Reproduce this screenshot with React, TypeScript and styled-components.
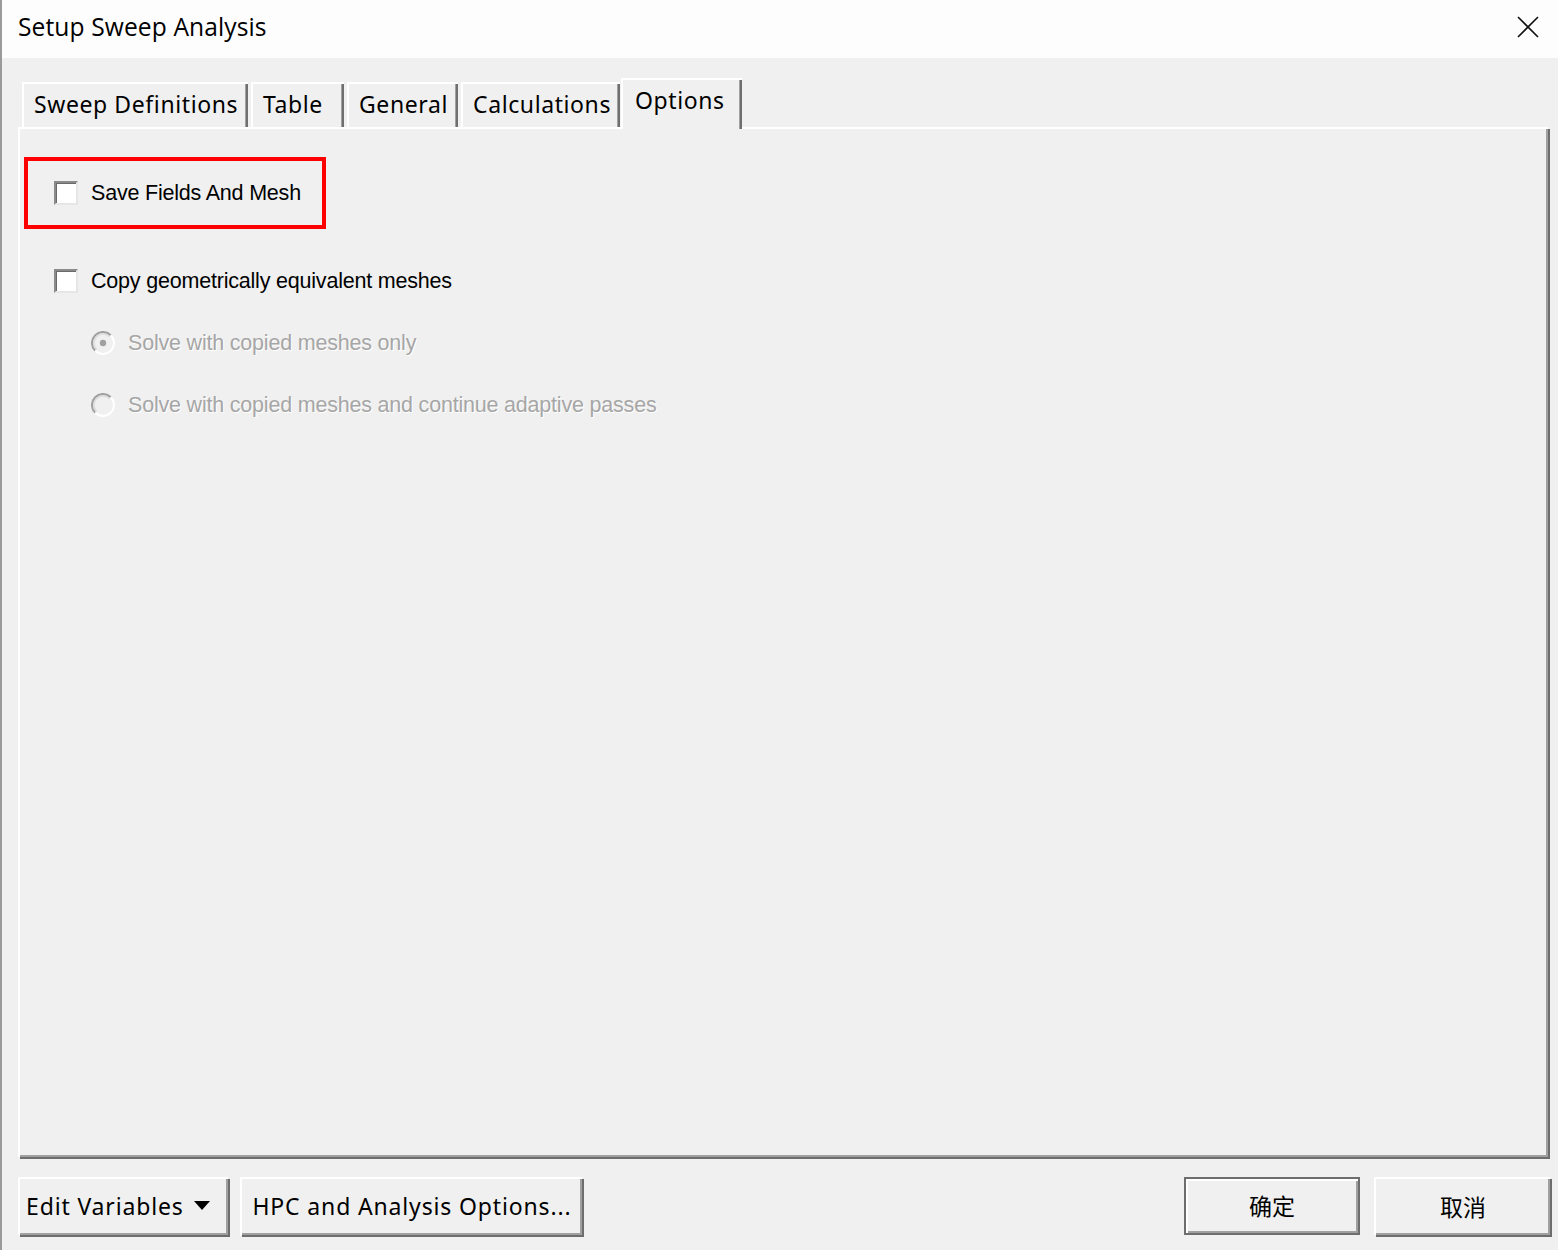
import React from "react"
import styled, { createGlobalStyle, css } from "styled-components"

const GlobalStyle = createGlobalStyle`
  html, body {
    margin: 0;
    padding: 0;
    background: #f0f0f0;
  }
`

const Window = styled.div`
  width: 1558px;
  height: 1250px;
  box-sizing: border-box;
  border-left: 2px solid #9a9a9a;
  background: #f0f0f0;
  display: flex;
  flex-direction: column;
  font-family: "Noto Sans", "DejaVu Sans", sans-serif;
  color: #000;
  overflow: hidden;
`

const TitleBar = styled.div`
  height: 58px;
  flex: none;
  background: #fefdfe;
  display: flex;
  align-items: center;
  justify-content: space-between;
  padding: 0 16px 5px 16px;
  box-sizing: border-box;

  .title {
    font-family: "Open Sans", "Noto Sans", sans-serif;
    font-size: 24.6px;
    letter-spacing: 0.1px;
  }
`

const CloseButton = styled.button`
  width: 28px;
  height: 28px;
  border: none;
  background: transparent;
  padding: 0;
  display: flex;
  align-items: center;
  justify-content: center;
`

const Body = styled.div`
  flex: 1;
  display: flex;
  flex-direction: column;
  padding: 20px 8px 15px 16px;
`

const TabStrip = styled.div`
  display: flex;
  align-items: flex-end;
  height: 49px;
  padding-left: 4px;
  gap: 3px;
  position: relative;
  z-index: 1;
`

const Tab = styled.div<{ width: number; active?: boolean }>`
  width: ${(props) => props.width}px;
  height: 45px;
  box-sizing: border-box;
  padding: 0 0 3px 10px;
  display: flex;
  align-items: center;
  font-size: 23px;
  letter-spacing: 0.6px;
  white-space: nowrap;
  background: #f0f0f0;
  border-top: 2px solid #fff;
  border-left: 2px solid #fff;
  box-shadow: inset -2px 0 0 #6f6f6f, inset -3px 0 0 #a0a0a0;

  ${(props) =>
    props.active &&
    css`
      height: 51px;
      margin-bottom: -2px;
      margin-left: -2px;
      padding: 0 0 10px 12px;
    `}
`

const Panel = styled.div`
  flex: 1;
  box-sizing: border-box;
  border-top: 2px solid #fff;
  border-left: 2px solid #fff;
  box-shadow: inset -2px -2px 0 #a0a0a0, 2px 2px 0 #6d6d6d;
  margin-right: 2px;
  margin-bottom: 2px;
  padding: 28px 0 0 4px;
  display: flex;
  flex-direction: column;
  font-family: "Liberation Sans", Arial, sans-serif;
`

const Highlight = styled.div`
  width: 302px;
  height: 72px;
  box-sizing: border-box;
  border: 4px solid #ff0000;
  display: flex;
  align-items: center;
  padding-left: 26px;
`

const OptionRow = styled.label<{ indent?: number; disabled?: boolean }>`
  display: flex;
  align-items: center;
  gap: 13px;
  height: 24px;
  margin-left: ${(props) => props.indent ?? 0}px;
  font-size: 21.5px;
  letter-spacing: -0.2px;
  white-space: nowrap;
  color: ${(props) => (props.disabled ? "#a6a6a6" : "#000")};
  text-shadow: ${(props) => (props.disabled ? "1px 1px 0 #fff" : "none")};
`

const OptionList = styled.div`
  display: flex;
  flex-direction: column;
  gap: 38px;
  margin-top: 40px;
`

const CheckBox = styled.span`
  width: 24px;
  height: 24px;
  box-sizing: border-box;
  background: #fff;
  border-top: 2px solid #8a8a8a;
  border-left: 2px solid #8a8a8a;
  border-right: 2px solid #e6e6e6;
  border-bottom: 2px solid #e6e6e6;
  box-shadow: inset 1px 1px 0 #6a6a6a;
  flex: none;
`

const Footer = styled.div`
  display: flex;
  align-items: center;
  justify-content: space-between;
  margin-top: 18px;
  height: 58px;
`

const ButtonGroup = styled.div<{ gap: number }>`
  display: flex;
  gap: ${(props) => props.gap}px;
  height: 100%;
`

const Button = styled.button<{ width: number; primary?: boolean; align?: string }>`
  width: ${(props) => props.width}px;
  height: 58px;
  box-sizing: border-box;
  background: #f0f0f0;
  border: none;
  border-top: 2px solid #fff;
  border-left: 2px solid #fff;
  box-shadow: inset -2px -2px 0 #a0a0a0, 2px 2px 0 #6d6d6d;
  font-family: "Noto Sans", "DejaVu Sans", sans-serif;
  font-size: 23px;
  letter-spacing: 0.85px;
  color: #000;
  display: flex;
  align-items: center;
  justify-content: ${(props) => props.align ?? "center"};
  gap: 10px;
  padding: 0 6px 2px 6px;
  white-space: nowrap;

  ${(props) =>
    props.primary &&
    css`
      border: 2px solid #6d6d6d;
      box-shadow: inset 2px 2px 0 #fff, inset -2px -2px 0 #a0a0a0;
    `}
`

const CjkLabel = styled.span`
  font-family: "Noto Sans CJK SC", sans-serif;
  font-size: 23px;
  letter-spacing: 0;
  line-height: 1;
`

const Radio = ({ checked }: { checked?: boolean }) => (
  <svg width="24" height="24" viewBox="0 0 24 24" style={{ flex: "none" }}>
    <circle cx="12" cy="12" r="10" fill="#f0f0f0" />
    <path d="M4.2 19.8 A10 10 0 0 1 19.8 4.2" fill="none" stroke="#a0a0a0" strokeWidth="2" />
    <path d="M5.6 18.4 A8 8 0 0 1 18.4 5.6" fill="none" stroke="#dcdcdc" strokeWidth="1.5" />
    <path d="M19.8 4.2 A10 10 0 0 1 4.2 19.8" fill="none" stroke="#ffffff" strokeWidth="2" />
    {checked && <circle cx="12" cy="12" r="3.2" fill="#a0a0a0" />}
  </svg>
)

const tabs = [
  { label: "Sweep Definitions", width: 226 },
  { label: "Table", width: 93 },
  { label: "General", width: 111 },
  { label: "Calculations", width: 159 },
  { label: "Options", width: 121 },
]

export default function App() {
  return (
    <>
      <GlobalStyle />
      <Window>
        <TitleBar>
          <span className="title">Setup Sweep Analysis</span>
          <CloseButton>
            <svg width="22" height="22" viewBox="0 0 22 22">
              <path d="M1 1 L21 21 M21 1 L1 21" stroke="#111" strokeWidth="1.6" />
            </svg>
          </CloseButton>
        </TitleBar>
        <Body>
          <TabStrip>
            {tabs.map((t) => (
              <Tab key={t.label} width={t.width} active={t.label === "Options"}>
                {t.label}
              </Tab>
            ))}
          </TabStrip>
          <Panel>
            <Highlight>
              <OptionRow>
                <CheckBox />
                Save Fields And Mesh
              </OptionRow>
            </Highlight>
            <OptionList>
              <OptionRow indent={30}>
                <CheckBox />
                Copy geometrically equivalent meshes
              </OptionRow>
              <OptionRow indent={67} disabled>
                <Radio checked />
                Solve with copied meshes only
              </OptionRow>
              <OptionRow indent={67} disabled>
                <Radio />
                Solve with copied meshes and continue adaptive passes
              </OptionRow>
            </OptionList>
          </Panel>
          <Footer>
            <ButtonGroup gap={12}>
              <Button width={210} align="flex-start">
                Edit Variables
                <svg width="16" height="10" viewBox="0 0 16 10">
                  <path d="M0 0 H16 L8 9 Z" fill="#000" />
                </svg>
              </Button>
              <Button width={342}>HPC and Analysis Options...</Button>
            </ButtonGroup>
            <ButtonGroup gap={14}>
              <Button width={176} primary>
                <CjkLabel>确定</CjkLabel>
              </Button>
              <Button width={176}>
                <CjkLabel>取消</CjkLabel>
              </Button>
            </ButtonGroup>
          </Footer>
        </Body>
      </Window>
    </>
  )
}
